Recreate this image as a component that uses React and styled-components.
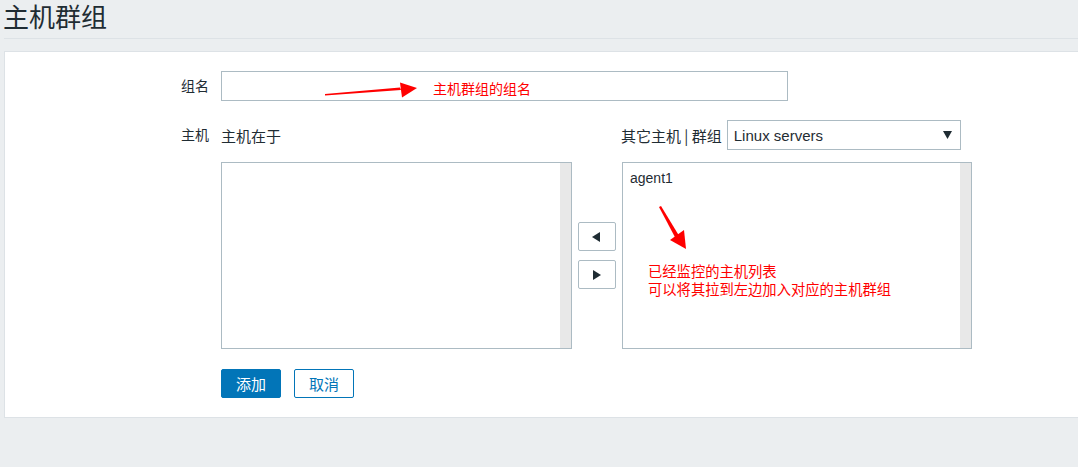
import React from 'react'
import styled, { createGlobalStyle } from 'styled-components'

const GlobalStyle = createGlobalStyle`
  html, body {
    margin: 0;
    padding: 0;
    background: #ebeef0;
  }
  body {
    font-family: "Liberation Sans", "Noto Sans CJK SC", sans-serif;
    font-size: 14px;
    color: #1f2c33;
  }
`

const Header = styled.header`
  height: 38px;
  margin-left: 4px;
  border-bottom: 1px solid #dde2e6;
  display: flex;
  align-items: flex-start;
`

const Title = styled.h1`
  margin: 0 0 0 -1px;
  font-family: "Noto Sans CJK SC", sans-serif;
  font-size: 26px;
  font-weight: 400;
  line-height: 32px;
  color: #1f2c33;
`

const Panel = styled.main`
  margin: 12px 0 0 4px;
  background: #fff;
  border: 1px solid #dde2e6;
  border-right: none;
  padding: 19px 0 19px 0;
  position: relative;
`

const Form = styled.div`
  display: grid;
  grid-template-columns: 204px 1fr;
  column-gap: 12px;
  row-gap: 19px;
`

const Label = styled.label`
  text-align: right;
  font-family: "Noto Sans CJK SC", sans-serif;
  font-size: 14px;
  line-height: 29px;
  padding-top: ${(p) => p.$top || 0}px;
`

const TextInput = styled.input`
  box-sizing: border-box;
  width: 567px;
  height: 30px;
  border: 1px solid #acbbc3;
  background: #fff;
  outline: none;
`

const Hosts = styled.div`
  display: grid;
  grid-template-columns: 351px 50px 350px;
  grid-template-rows: 30px 187px;
  row-gap: 12px;
`

const ColHead = styled.div`
  display: flex;
  align-items: center;
  gap: 5px;
  font-family: "Noto Sans CJK SC", sans-serif;
  font-size: 15px;
  margin-left: ${(p) => p.$shift || 0}px;
`

const Select = styled.div`
  box-sizing: border-box;
  width: 234px;
  height: 30px;
  border: 1px solid #acbbc3;
  display: flex;
  align-items: center;
  justify-content: space-between;
  padding: 0 8px 0 6px;
  font-family: "Liberation Sans", sans-serif;
  font-size: 15px;
  color: #1f2c33;
`

const ListBox = styled.div`
  box-sizing: border-box;
  border: 1px solid #acbbc3;
  display: flex;
  grid-row: 2;
`

const ListItems = styled.div`
  flex: 1;
  padding: 6px 7px;
  font-family: "Liberation Sans", sans-serif;
  font-size: 14px;
  line-height: 18px;
`

const Scrollbar = styled.div`
  width: 11px;
  background: #e8e8e8;
`

const MoveButtons = styled.div`
  grid-row: 2;
  display: flex;
  flex-direction: column;
  align-items: center;
  justify-content: center;
  gap: 9px;
  padding-right: 1px;
`

const MoveButton = styled.button`
  box-sizing: border-box;
  width: 38px;
  height: 29px;
  border: 1px solid #acbbc3;
  border-radius: 2px;
  background: #fff;
  display: flex;
  align-items: center;
  justify-content: center;
  padding: 0;
`

const Actions = styled.div`
  grid-column: 2;
  display: flex;
  gap: 13px;
  padding-top: 1px;
`

const Button = styled.button`
  box-sizing: border-box;
  width: 60px;
  height: 29px;
  border-radius: 2px;
  border: 1px solid #0275b8;
  background: ${(p) => (p.$primary ? '#0275b8' : '#fff')};
  color: ${(p) => (p.$primary ? '#fff' : '#0275b8')};
  font-family: "Noto Sans CJK SC", sans-serif;
  font-size: 15px;
  padding: 0;
`

const Note = styled.div`
  position: absolute;
  left: ${(p) => p.$x}px;
  top: ${(p) => p.$y}px;
  color: #ff0000;
  font-family: "Noto Sans CJK SC", sans-serif;
  font-size: ${(p) => p.$size || 14}px;
  line-height: 18px;
  white-space: nowrap;
  pointer-events: none;
`

const NoteLine = styled.div`
  height: 18px;
  line-height: 18px;
`

const ArrowLayer = styled.svg`
  position: absolute;
  left: 0;
  top: 0;
  pointer-events: none;
  overflow: visible;
`

const Tri = ({ dir }) => (
  <svg width="9" height="10" viewBox="0 0 9 10">
    {dir === 'left' ? (
      <polygon points="8,0 8,10 0,5" fill="#1f2c33" />
    ) : (
      <polygon points="1,0 1,10 9,5" fill="#1f2c33" />
    )}
  </svg>
)

export default function App() {
  return (
    <>
      <GlobalStyle />
      <Header>
        <Title>主机群组</Title>
      </Header>
      <Panel>
        <Form>
          <Label>组名</Label>
          <TextInput type="text" />

          <Label $top={-4}>主机</Label>
          <Hosts>
            <ColHead>主机在于</ColHead>
            <div />
            <ColHead $shift={-1}>
              其它主机 | 群组
              <Select>
                <span>Linux servers</span>
                <svg width="9" height="8" viewBox="0 0 9 8">
                  <polygon points="0,0 9,0 4.5,8" fill="#1f2c33" />
                </svg>
              </Select>
            </ColHead>

            <ListBox>
              <ListItems />
              <Scrollbar />
            </ListBox>
            <MoveButtons>
              <MoveButton><Tri dir="left" /></MoveButton>
              <MoveButton><Tri dir="right" /></MoveButton>
            </MoveButtons>
            <ListBox>
              <ListItems>agent1</ListItems>
              <Scrollbar />
            </ListBox>
          </Hosts>

          <Actions>
            <Button $primary>添加</Button>
            <Button>取消</Button>
          </Actions>
        </Form>

        {/* red annotations drawn over the form */}
        <ArrowLayer width="1" height="1">
          <polygon points="320,42 395,35.5 396,38 320,43.5" fill="#ff0000" />
          <polygon points="395,30.5 412,36 397,45.5" fill="#ff0000" />
          <polygon points="654,155 656,154 676,187 672,189" fill="#ff0000" />
          <polygon points="665,188 679,178 681,197" fill="#ff0000" />
        </ArrowLayer>
        <Note $x={428} $y={27}>主机群组的组名</Note>
        <Note $x={643} $y={210} $size={14.3}>
          <NoteLine>已经监控的主机列表</NoteLine>
          <NoteLine>可以将其拉到左边加入对应的主机群组</NoteLine>
        </Note>
      </Panel>
    </>
  )
}
